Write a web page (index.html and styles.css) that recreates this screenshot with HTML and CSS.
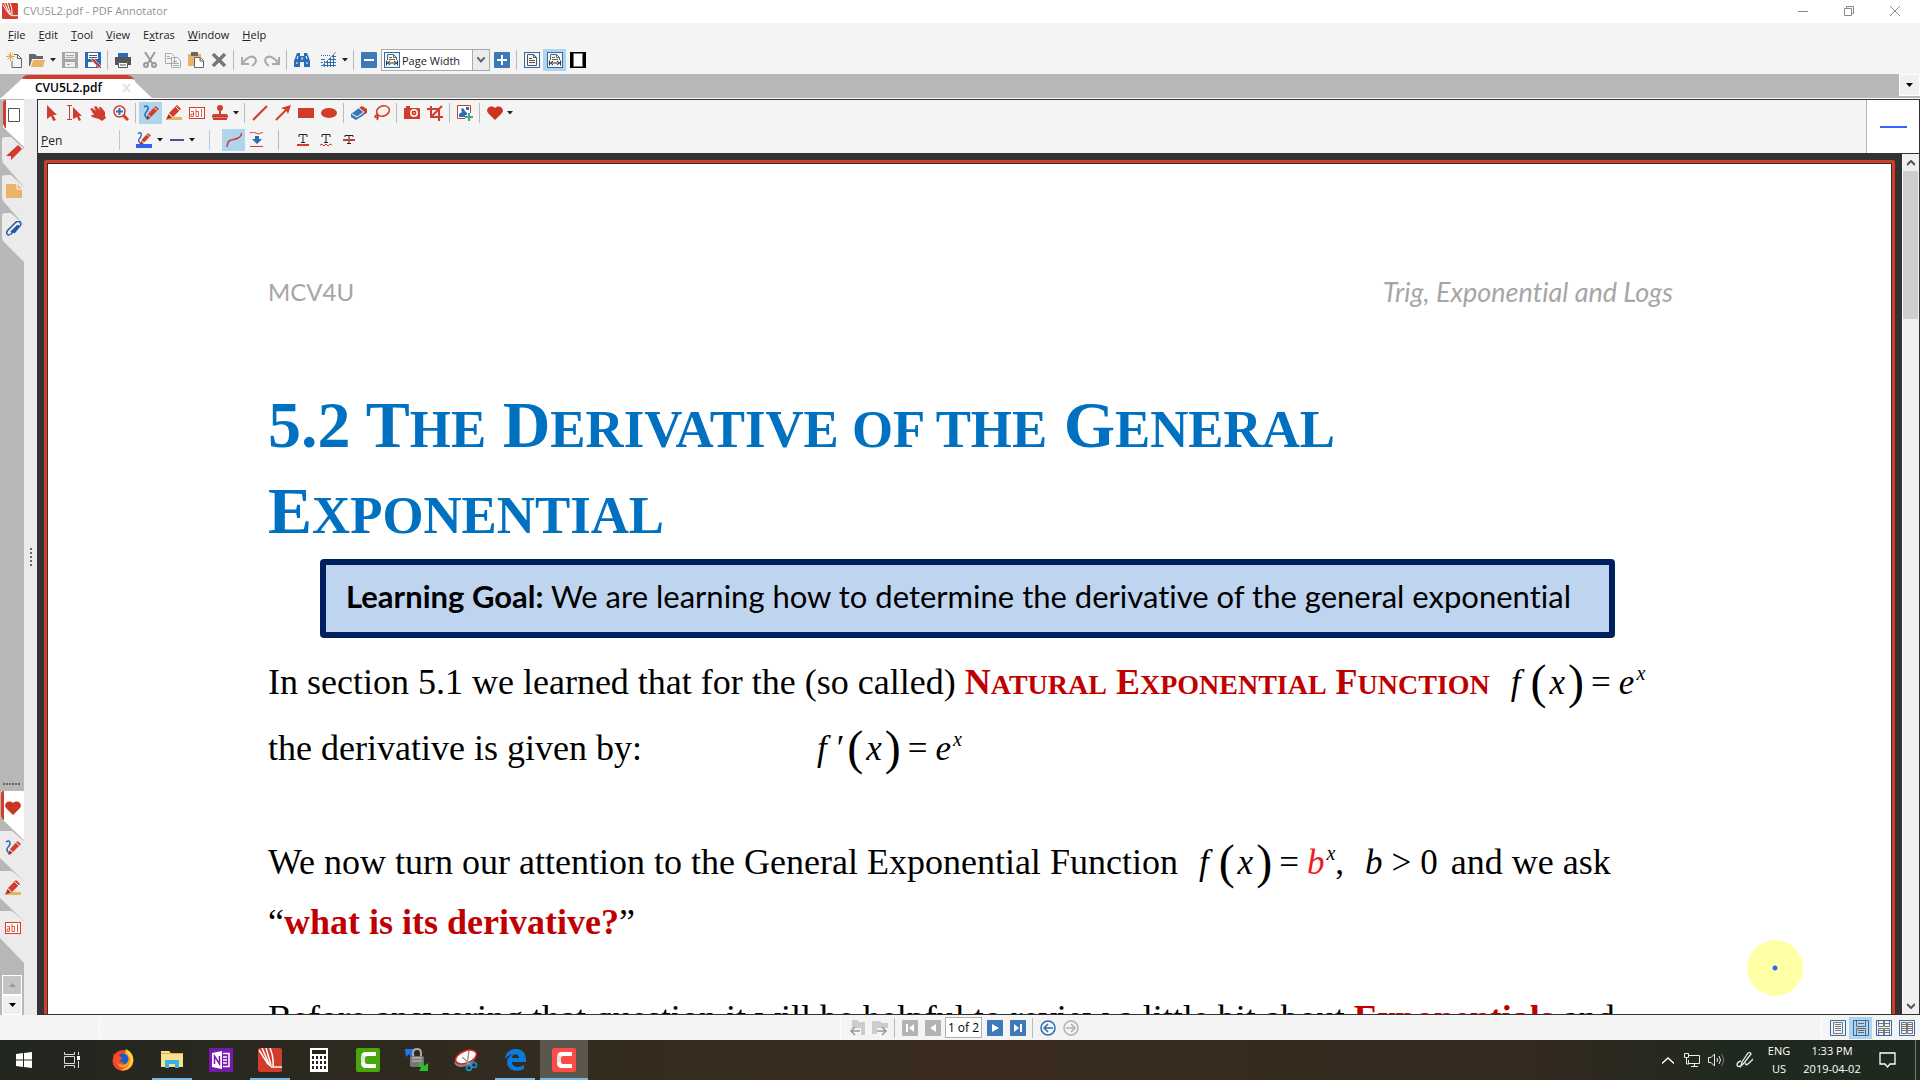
FILE: index.html
```html
<!doctype html>
<html lang="en">

<head>
  <meta charset="utf-8">
  <title>CVU5L2.pdf - PDF Annotator</title>
  <link rel="stylesheet" href="styles.css">
</head>

<body>
  <!-- shared icons -->
  <svg class="sprite">
    <symbol id="caret" viewBox="0 0 6 4"><path d="M0 0h6L3 3.5z" fill="#222"/></symbol>
    <symbol id="logo" viewBox="0 0 24 24">
      <rect width="24" height="24" rx="2" fill="#d23c2a"/>
      <path d="M1 2l9 14M4 0l7 16M8 0l5 17M12 0q4 9 3 18M10 16l4 3h10" fill="none" stroke="#fff" stroke-width="1.5"/>
    </symbol>
    <symbol id="pen" viewBox="0 0 16 16">
      <path d="M1 2c4-3 5 1 3 4-3 3-3 5 1 8" fill="none" stroke="#2a6cb5" stroke-width="1.6"/>
      <path d="M12.5 1L16 4 8 12 5 9z" fill="#d23c2a"/><path d="M4.5 10l3 3-4 2z" fill="#b02c1c"/><path d="M11 2.500l3 3" stroke="#fff"/>
    </symbol>
    <symbol id="marker" viewBox="0 0 16 16">
      <path d="M5 12h11v3H2z" fill="#e9b25c"/><path d="M11 0l4 4-8 8-4-4z" fill="#d23c2a"/><path d="M2.500 9l3.500 3.500L0 15z" fill="#b5301f"/><path d="M10 2l4 4" stroke="#fff"/>
    </symbol>
    <symbol id="textbox" viewBox="0 0 16 12">
      <rect x=".5" y=".5" width="15" height="11" fill="#fff" stroke="#d23c2a"/>
      <path d="M2 4.500h2.500v5H2v-2.500h2.500M7 2v7.500h2.500v-5H7M12.500 2v8" fill="none" stroke="#dc5a48"/>
    </symbol>
    <symbol id="heart" viewBox="0 0 16 14"><path d="M8 14L1 7C-2 3 3-2 8 2c5-4 10 1 7 5z" fill="#c8361f"/></symbol>
    <symbol id="pagewidth" viewBox="0 0 16 16">
      <rect x=".5" y=".5" width="15" height="15" fill="#f4f4f4" stroke="#2d6cb0"/>
      <path d="M3.500 8V2.500h6l3 3V8M9.500 2.500v3h3M5 5.500h3M5 7.500h6" fill="none" stroke="#666"/>
      <path d="M2 11h12M2.500 8.500v5M13.500 8.500v5M6 9l-2.500 2L6 13M10 9l2.500 2L10 13" fill="none" stroke="#333"/>
    </symbol>
    <symbol id="camtasia" viewBox="0 0 24 24">
      <rect width="24" height="24" rx="2" fill="currentColor"/>
      <path d="M20 4H10Q5 4 5 9v6q0 5 5 5h10v-4h-9q-2 0-2-2v-4q0-2 2-2h9z" fill="#fff"/>
      <path d="M9 8.500L5 6v9l4-1z" fill="#000" opacity=".12"/>
    </symbol>
  </svg>

  <div class="app">
    <header class="titlebar">
      <svg width="16" height="16"><use href="#logo"/></svg>
      <span class="title">CVU5L2.pdf - PDF Annotator</span>
      <button class="winbtn" aria-label="Minimize"><svg width="10" height="10"><path d="M0 5.500h10" stroke="#888"/></svg></button>
      <button class="winbtn" aria-label="Restore"><svg width="10" height="10" fill="none" stroke="#888"><path d="M.5 2.500h7v7h-7zM2.500 2V.5h7v7H8"/></svg></button>
      <button class="winbtn" aria-label="Close"><svg width="10" height="10"><path d="M0 0l10 10M10 0L0 10" stroke="#888"/></svg></button>
    </header>

    <nav class="menubar">
      <button><u>F</u>ile</button>
      <button><u>E</u>dit</button>
      <button><u>T</u>ool</button>
      <button><u>V</u>iew</button>
      <button>E<u>x</u>tras</button>
      <button><u>W</u>indow</button>
      <button><u>H</u>elp</button>
    </nav>

    <div class="toolbar main-toolbar">
      <button aria-label="New"><svg width="16" height="16"><path d="M8 2.500h3.500l4 4v9H6V9M11.500 2.500v4h4" fill="none" stroke="#666"/><path d="M4.500 0v9M0 4.500h9M1.500 1.500l6 6M7.500 1.500l-6 6" stroke="#e9a845"/></svg></button>
      <button aria-label="Open"><svg width="16" height="16"><path d="M0 2h6l2 2h6v3H3l-2 7H0z" fill="#666"/><path d="M4 8h12l-2 7H2z" fill="#e9b465"/></svg></button>
      <button class="drop" aria-label="Open recent"><svg width="6" height="4"><use href="#caret"/></svg></button>
      <button aria-label="Save"><svg width="16" height="16"><path d="M0 0h16v16H0z" fill="#a6a6a6"/><path d="M3 1h10v6H3zM3 10h10v5H3z" fill="#eee"/><path d="M4 3.500h8M4 5.500h8M5 12.500h3" stroke="#a6a6a6"/></svg></button>
      <button aria-label="Save as"><svg width="16" height="16"><path d="M0 0h16v16H0z" fill="#2a6cb5"/><path d="M3 1h10v6H3zM3 10h8v5H3z" fill="#fff"/><path d="M4 3.500h8M4 5.500h8" stroke="#555"/><path d="M6 6l3 1 7 7-2 2-7-7z" fill="#d23c2a" stroke="#fff" stroke-width=".5"/></svg></button>
      <i class="sep"></i>
      <button aria-label="Print"><svg width="16" height="16"><path d="M0 5h16v8h-3v-3H3v3H0z" fill="#555"/><path d="M3 1h10v4H3z" fill="#2a6cb5"/><path d="M3.500 10.500h9v5h-9zM5 13h6" fill="#fff" stroke="#555"/></svg></button>
      <button class="gap" aria-label="Cut"><svg width="16" height="16" fill="none" stroke="#999" stroke-width="2"><path d="M3 0l7 11M13 0L6 11"/><circle cx="4" cy="13" r="2"/><circle cx="12" cy="13" r="2"/></svg></button>
      <button aria-label="Copy"><svg width="16" height="16" fill="#f4f4f4" stroke="#aaa"><path d="M.5 1.500h6l3 3v7h-9zM6.500 5.500h6l3 3v7h-9zM2 4.500h3M2 6.500h4M8 9.500h4M8 11.500h6M8 13.500h6"/></svg></button>
      <button aria-label="Paste"><svg width="16" height="16"><path d="M0 2h13v12H0z" fill="#e9b465"/><path d="M3 0h7v4H3z" fill="#666"/><path d="M6.500 5.500h6l3 3v7h-9zM12 5.500v3.500h3" fill="#fff" stroke="#666"/></svg></button>
      <button aria-label="Delete"><svg width="16" height="16"><path d="M2 2l12 12M14 2L2 14" stroke="#777" stroke-width="3.500"/></svg></button>
      <i class="sep"></i>
      <button aria-label="Undo"><svg width="16" height="16" fill="none" stroke="#aaa" stroke-width="2"><path d="M1 5v7h7M1.500 11.500C6 5 11 3 14 6c2 3 0 6-3 8"/></svg></button>
      <button aria-label="Redo"><svg width="16" height="16" fill="none" stroke="#aaa" stroke-width="2"><path d="M15 5v7H8M14.500 11.500C10 5 5 3 2 6c-2 3 0 6 3 8"/></svg></button>
      <i class="sep"></i>
      <button aria-label="Find"><svg width="16" height="16"><path d="M3 1h3v3h4V1h3l3 8v6h-6v-5H6v5H0V9z" fill="#2a6cb5"/><path d="M2 11h2M12 11h2M4 4l-1 3M12 4l1 3M8 5v3" stroke="#fff"/></svg></button>
      <button class="gap" aria-label="Grid"><svg width="16" height="16"><path d="M0 13.500h15M4 10.500h11M7 7.500h8M10 4.500h5M0 10.500h2M0 7.500h4M3.500 9v6M6.500 8v7M9.500 5v10M12.500 2v13" stroke="#2a6cb5"/><path d="M0 3.500h9" stroke="#2a6cb5" stroke-dasharray="1 1"/><path d="M1 14L15 0" stroke="#888"/></svg></button>
      <button class="drop" aria-label="Grid options"><svg width="6" height="4"><use href="#caret"/></svg></button>
      <i class="sep"></i>
      <button aria-label="Zoom out"><svg width="16" height="16"><rect width="16" height="16" rx="1" fill="#3d78b8"/><path d="M3 8h10" stroke="#fff" stroke-width="2"/></svg></button>
      <div class="zoom-box">
        <svg width="16" height="16"><use href="#pagewidth"/></svg>
        <select aria-label="Zoom"><option>Page Width</option></select>
        <span class="zoom-arrow"><svg width="8" height="6"><path d="M0 0l4 4.500L8 0" fill="none" stroke="#666" stroke-width="2"/></svg></span>
      </div>
      <button aria-label="Zoom in"><svg width="16" height="16"><rect width="16" height="16" rx="1" fill="#3d78b8"/><path d="M3 8h10M8 3v10" stroke="#fff" stroke-width="2"/></svg></button>
      <i class="sep"></i>
      <button aria-label="Whole page"><svg width="16" height="16" fill="none"><rect x=".5" y=".5" width="15" height="15" stroke="#2d6cb0"/><path d="M3.500 2.500h6l3 3v8h-9zM9.500 2.500v3h3M5 6.500h3M5 8.500h6M5 10.500h6" stroke="#555"/></svg></button>
      <button class="active" aria-label="Page width"><svg width="16" height="16"><use href="#pagewidth"/></svg></button>
      <button aria-label="Full screen"><svg width="16" height="16"><path d="M0 0h16v16H0z"/><path d="M3.500 1.500h9v13h-9z" fill="#fff" stroke="#777"/></svg></button>
    </div>

    <div class="tabstrip">
      <div class="doc-tab">
        <svg class="tab-shape" width="153" height="24"><path d="M0 24L25 1h104l24 23z" fill="#fff"/><path d="M22 4q2-4 6-4h98q5 0 8 4z" fill="#d23c2a"/><path d="M21 5h114v2H21z" fill="#fff"/></svg>
        <span>CVU5L2.pdf</span>
        <button aria-label="Close tab"><svg width="9" height="8"><path d="M1 0l7 8M8 0L1 8" stroke="#e2e2e2" stroke-width="2"/></svg></button>
      </div>
      <button class="tab-list" aria-label="List tabs"><svg width="7" height="4"><path d="M0 0h7L3.500 4z"/></svg></button>
    </div>

    <div class="workspace">
      <aside class="sidebar">
        <div class="side-tabs">
          <button aria-label="Pages"><svg class="shape" width="24" height="50"><path d="M3 1h21v47L3 28z" fill="#fff"/><path d="M5 1Q3 1 3 4v21l2 4h1V1z" fill="#d23c2a"/></svg><svg class="glyph" width="16" height="16"><path d="M2.500 1.500h11v13h-11z" fill="#fff" stroke="#555"/></svg></button>
          <button aria-label="Bookmarks"><svg class="shape" width="24" height="50"><path d="M5 0h6l13 12v38L4 27Q2 25 2 22V3q0-3 3-3z" fill="#ebebeb"/></svg><svg class="glyph" width="16" height="16"><path d="M12 0l4 4L5 15v-4H0z" fill="#d23c2a"/></svg></button>
          <button aria-label="Annotations"><svg class="shape" width="24" height="50"><path d="M5 0h6l13 12v38L4 27Q2 25 2 22V3q0-3 3-3z" fill="#ebebeb"/></svg><svg class="glyph" width="16" height="16"><path d="M0 1h11l5 5v9H0z" fill="#e9b465"/><path d="M11 1v5h5" fill="#e9b465" stroke="#fff"/></svg></button>
          <button aria-label="Attachments"><svg class="shape" width="24" height="50"><path d="M5 0h6l13 12v37L4 29Q2 27 2 24V3q0-3 3-3z" fill="#ebebeb"/></svg><svg class="glyph" width="16" height="16"><path d="M5 11l6-6q2-1 1 1l-7 7q-3 2-4 0-1-2 1-4l7-7q3-3 5-1 2 3-1 5l-5 6" fill="none" stroke="#1d5aa8" stroke-width="1.500"/></svg></button>
        </div>
        <div class="tool-tabs">
          <div class="grip"></div>
          <button aria-label="Favorites"><svg class="shape" width="24" height="50"><path d="M1 0h23v49L3 29z" fill="#fff"/><path d="M3 0Q1 0 1 3v22l2 4h1V0z" fill="#d23c2a"/></svg><svg class="glyph" width="16" height="14"><use href="#heart"/></svg></button>
          <button aria-label="Pen"><svg class="shape" width="24" height="50"><path d="M0 0h12l12 10v40L0 27z" fill="#ebebeb"/></svg><svg class="glyph" width="16" height="16"><use href="#pen"/></svg></button>
          <button aria-label="Marker"><svg class="shape" width="24" height="50"><path d="M0 0h12l12 10v40L0 27z" fill="#ebebeb"/></svg><svg class="glyph" width="16" height="16"><use href="#marker"/></svg></button>
          <button aria-label="Text"><svg class="shape" width="24" height="52"><path d="M0 0h12l12 10v42L0 27z" fill="#ebebeb"/></svg><svg class="glyph" width="16" height="12"><use href="#textbox"/></svg></button>
          <div class="spin">
            <button class="disabled" aria-label="Up"><svg width="7" height="4"><path d="M0 4h7L3.500 0z" fill="#999"/></svg></button>
            <button aria-label="Down"><svg width="7" height="4"><path d="M0 0h7L3.500 4z"/></svg></button>
          </div>
        </div>
      </aside>
      <div class="splitter"><div class="grip-v"></div></div>

      <main class="editor">
        <div class="tools">
          <div class="tool-rows">
            <div class="toolbar">
              <button aria-label="Select"><svg width="16" height="16"><path d="M3 0l10 10H9l3 5-3 1-2-5-4 3z" fill="#d23c2a"/></svg></button>
              <button aria-label="Select text"><svg width="16" height="16"><path d="M6 2l9 9h-3l2 4-2 1-2-4-4 2z" fill="#d23c2a"/><path d="M0 .5h5M0 14.500h5M2.500 0v15" stroke="#d23c2a"/></svg></button>
              <button aria-label="Pan"><svg width="16" height="16"><path d="M0 4l2-1 4 3-2-4 2-1 4 4-1-3 2 0 4 5v4l1 2-4 3-3-2-7-2-1-2 3 0-3-5z" fill="#d23c2a"/></svg></button>
              <button aria-label="Zoom"><svg width="16" height="16"><path d="M10 10l5 5" stroke="#d23c2a" stroke-width="3"/><circle cx="6.500" cy="6.500" r="5.500" fill="#fff" stroke="#d23c2a" stroke-width="1.500"/><path d="M3 6.500h7M6.500 3v7" stroke="#2a6cb5" stroke-width="2"/></svg></button>
              <i class="sep"></i>
              <button class="active" aria-label="Pen"><svg width="16" height="16"><use href="#pen"/></svg></button>
              <button aria-label="Marker"><svg width="16" height="16"><use href="#marker"/></svg></button>
              <button aria-label="Text"><svg width="16" height="12"><use href="#textbox"/></svg></button>
              <button aria-label="Stamp"><svg width="16" height="16"><circle cx="8" cy="3" r="3" fill="#d23c2a"/><path d="M7 5h2v4h5q2 0 2 3H0q0-3 2-3h5zM1 13h14v2H1z" fill="#d23c2a"/><path d="M0 12.500h16" stroke="#c9779f"/></svg></button>
              <button class="drop" aria-label="Stamps"><svg width="6" height="4"><use href="#caret"/></svg></button>
              <i class="sep"></i>
              <button aria-label="Line"><svg width="16" height="16"><path d="M1 15L15 1" stroke="#d23c2a" stroke-width="2"/></svg></button>
              <button aria-label="Arrow"><svg width="16" height="16"><path d="M1 15L12 4" stroke="#d23c2a" stroke-width="2"/><path d="M16 0l-3 9-2-4-5-2z" fill="#d23c2a"/></svg></button>
              <button aria-label="Rectangle"><svg width="16" height="16"><path d="M0 3h16v10H0z" fill="#d23c2a"/></svg></button>
              <button aria-label="Ellipse"><svg width="16" height="16"><ellipse cx="8" cy="8" rx="8" ry="5" fill="#d23c2a"/></svg></button>
              <i class="sep"></i>
              <button aria-label="Eraser"><svg width="16" height="16"><path d="M9 2l2-1 5 3v4l-4 2-6-4z" fill="#d23c2a"/><path d="M0 9l8-6 5 4v3l-8 5-5-3z" fill="#3d78b8"/><path d="M1 9l5 3 7-5M8 3l5 4" fill="none" stroke="#fff"/></svg></button>
              <button aria-label="Lasso"><svg width="16" height="16" fill="none" stroke="#d23c2a" stroke-width="1.500"><ellipse cx="9" cy="6" rx="6.500" ry="5" transform="rotate(-20 9 6)"/><path d="M4 10q-3 0-3 2 3 1 3 0 0-2-1-2 2 2 0 5"/></svg></button>
              <i class="sep"></i>
              <button aria-label="Snapshot"><svg width="16" height="16"><path d="M0 3h2V1h4v2h9l1 1v10H0z" fill="#d23c2a"/><circle cx="10" cy="8" r="3.200" fill="#d23c2a" stroke="#fff" stroke-width="1.500"/><circle cx="10" cy="8" r="1" fill="#e9b465"/></svg></button>
              <button aria-label="Crop"><svg width="16" height="16"><path d="M0 4h12v12M4 1v11h12M15 1L5 11" fill="none" stroke="#d23c2a" stroke-width="2"/></svg></button>
              <i class="sep"></i>
              <button aria-label="Insert image"><svg width="16" height="16"><path d="M.5.5h13v13H.5z" fill="#fff" stroke="#d23c2a"/><path d="M2 12V9l3-2-1-3 2-1 2 3 3 3v3zM9 2h3v3H9z" fill="#2a6cb5"/><path d="M12 8v8M8 12h8" stroke="#f4f4f4" stroke-width="4"/><path d="M12 8v8M8 12h8" stroke="#42ac86" stroke-width="2"/></svg></button>
              <i class="sep"></i>
              <button aria-label="Favorites"><svg width="16" height="14"><use href="#heart"/></svg></button>
              <button class="drop tight" aria-label="More favorites"><svg width="6" height="4"><use href="#caret"/></svg></button>
            </div>
            <div class="toolbar options">
              <span class="tool-name"><u>P</u>en</span>
              <i class="sep wide blue"></i>
              <button aria-label="Pen color"><svg width="16" height="16"><path d="M0 12h16v4H0z" fill="#2f62f5"/><use href="#pen" width="16" height="14"/></svg></button>
              <button class="drop" aria-label="Colors"><svg width="6" height="4"><use href="#caret"/></svg></button>
              <button aria-label="Line width"><svg width="14" height="16"><path d="M0 8h14" stroke="#4a5584" stroke-width="2"/></svg></button>
              <button class="drop tight" aria-label="Widths"><svg width="6" height="4"><use href="#caret"/></svg></button>
              <i class="sep wide far blue"></i>
              <button class="active" aria-label="Smooth"><svg width="16" height="16"><path d="M1 15C2 5 7 9 12 6q3-1 4-5" fill="none" stroke="#c9403a" stroke-width="1.600"/></svg></button>
              <button aria-label="Pressure"><svg width="16" height="16"><path d="M1 1q4-2 6 0t7-1M1 14.500h13" fill="none" stroke="#d23c2a"/><path d="M6 4h4v3h3l-5 5-5-5h3z" fill="#2a6cb5"/></svg></button>
              <i class="sep wide"></i>
              <button aria-label="Underline"><svg width="12" height="12"><path d="M2 3V.5h8V3M6 0v8M4 8.500h4" fill="none" stroke="#223"/><path d="M0 11h12" stroke="#d23c2a" stroke-width="2"/></svg></button>
              <button aria-label="Squiggly"><svg width="12" height="12"><path d="M2 3V.5h8V3M6 0v8M4 8.500h4" fill="none" stroke="#223"/><path d="M0 11l2-1 2 2 2-2 2 2 2-2 2 1" fill="none" stroke="#d23c2a"/></svg></button>
              <button aria-label="Strikethrough"><svg width="12" height="12"><path d="M2 3V1.500h8V3M6 1v8M4 9.500h4" fill="none" stroke="#223"/><path d="M0 6h12" stroke="#d23c2a" stroke-width="2"/></svg></button>
            </div>
          </div>
          <div class="preview"><div class="stroke"></div></div>
        </div>

        <div class="view">
          <div class="canvas">
            <article class="page">
              <div class="page-header"><span>MCV4U</span><em>Trig, Exponential and Logs</em></div>
              <h1>5.2 T<small>he</small> D<small>erivative of the</small> G<small>eneral</small> E<small>xponential</small></h1>
              <div class="goal"><b>Learning Goal:</b> We are learning how to determine the derivative of the general exponential</div>
              <p class="intro">In section 5.1 we learned that for the (so called) <b class="caps">N<small>atural</small> E<small>xponential</small> F<small>unction</small></b>
                <span class="math"><i>f</i><span class="paren open">(</span><i>x</i><span class="paren">)</span><span class="op">=</span><i>e</i><sup>x</sup></span><br>
                the derivative is given by:
                <span class="math second"><i>f</i><span class="prime">′</span><span class="paren">(</span><i>x</i><span class="paren">)</span><span class="op">=</span><i>e</i><sup>x</sup></span></p>
              <p class="question">We now turn our attention to the General Exponential Function
                <span class="math"><i>f</i><span class="paren open">(</span><i>x</i><span class="paren">)</span><span class="op">=</span><i class="red">b</i><sup>x</sup>,</span>
                <span class="math condition"><i>b</i><span class="op">&gt;</span>0</span> and we ask<br>
                “<b>what is its derivative?</b>”</p>
              <p class="review">Before answering that question it will be helpful to review a little bit about <b>Exponentials</b> and</p>
            </article>
            <div class="spot"></div>
          </div>
          <div class="scrollbar">
            <button aria-label="Scroll up"><svg width="8" height="6"><path d="M0 5l4-4 4 4" fill="none" stroke="#555" stroke-width="2"/></svg></button>
            <div class="thumb"></div>
            <button aria-label="Scroll down"><svg width="8" height="6"><path d="M0 1l4 4 4-4" fill="none" stroke="#555" stroke-width="2"/></svg></button>
          </div>
        </div>
      </main>
    </div>

    <footer class="statusbar">
      <div class="status-side"><i class="notch"></i></div>
      <div class="pager">
        <i class="notch"></i>
        <button aria-label="Previous document"><svg width="16" height="16"><path d="M3 0h5l2 2h6v13h-4V8H3z" fill="#ccc"/><path d="M11 11H2M6 7l-4 4 4 4" fill="none" stroke="#999" stroke-width="1.500"/></svg></button>
        <button aria-label="Next document"><svg width="16" height="16"><path d="M0 1h8l2 2h6v5H5v6H0z" fill="#ccc"/><path d="M5 11h9M10 7l4 4-4 4" fill="none" stroke="#999" stroke-width="1.500"/></svg></button>
        <i class="sep"></i>
        <button aria-label="First page"><svg width="16" height="16"><rect width="16" height="16" rx="1" fill="#b2b2b2"/><path d="M4 4h2v8H4zM12 4v8L7 8z" fill="#fff"/></svg></button>
        <button aria-label="Previous page"><svg width="16" height="16"><rect width="16" height="16" rx="1" fill="#b2b2b2"/><path d="M11 4v8L5 8z" fill="#fff"/></svg></button>
        <input type="text" value="1 of 2" aria-label="Page">
        <button aria-label="Next page"><svg width="16" height="16"><rect width="16" height="16" rx="1" fill="#3d78b8"/><path d="M5 4v8l7-4z" fill="#fff"/></svg></button>
        <button aria-label="Last page"><svg width="16" height="16"><rect width="16" height="16" rx="1" fill="#3d78b8"/><path d="M4 4v8l5-4zM10 4h2v8h-2z" fill="#fff"/></svg></button>
        <i class="sep"></i>
        <button aria-label="Back"><svg width="16" height="16" fill="none" stroke="#2a6cb5" stroke-width="1.500"><circle cx="8" cy="8" r="7"/><path d="M13 8H4M8 4L4 8l4 4"/></svg></button>
        <button aria-label="Forward"><svg width="16" height="16" fill="none" stroke="#b0b0b0" stroke-width="1.500"><circle cx="8" cy="8" r="7"/><path d="M3 8h9M8 4l4 4-4 4"/></svg></button>
      </div>
      <div class="layouts">
        <i class="notch"></i>
        <button aria-label="Single page"><svg width="16" height="16" fill="none"><path d="M.5.5h15v15H.5z" stroke="#2d6cb0"/><path d="M3.500 2.500h9v11h-9zM5 4.500h6M5 6.500h6M5 8.500h6M5 10.500h6" stroke="#777"/></svg></button>
        <button class="active" aria-label="Continuous"><svg width="16" height="16" fill="none"><path d="M.5.5h15v15H.5z" stroke="#2d6cb0"/><path d="M3.500 1v5.500h9V1M5 3.500h6M3.500 15V8.500h9V15M5 10.500h6M5 12.500h6" stroke="#666"/></svg></button>
        <button aria-label="Two pages continuous"><svg width="16" height="16" fill="none"><path d="M.5.5h15v15H.5z" stroke="#2d6cb0"/><path d="M2.500 1v5.500h5V1M8.500 1v5.500h5V1M2.500 15V8.500h5V15M8.500 15V8.500h5V15M3 3.500h4M9 3.500h4M3 10.500h4M9 10.500h4M3 12.500h4M9 12.500h4" stroke="#777"/></svg></button>
        <button aria-label="Two pages"><svg width="16" height="16" fill="none"><path d="M.5.5h15v15H.5z" stroke="#2d6cb0"/><path d="M2.500 2.500h5v11h-5zM8.500 2.500h5v11h-5zM3 4.500h4M3 6.500h4M3 8.500h4M3 10.500h4M9 4.500h4M9 6.500h4M9 8.500h4M9 10.500h4" stroke="#777"/></svg></button>
      </div>
    </footer>
  </div>

  <div class="taskbar">
    <button aria-label="Start"><svg width="16" height="16"><path d="M0 2l7-1v6.500H0zM8 1l8-1v7.500H8zM0 8.500h7V15l-7-1zM8 8.500h8V16l-8-1z" fill="#fff"/></svg></button>
    <button class="taskview" aria-label="Task View"><svg width="16" height="16" fill="none" stroke="#ddd"><path d="M.5 4.500h10v7H.5zM.5 0v2.500h10V0M.5 16v-2.500h10V16M14.500 0v3M14.500 9v7"/><path d="M13 4h3v4h-3z" fill="#fff" stroke="none"/></svg></button>
    <button aria-label="Firefox"><svg width="22" height="22" viewBox="0 0 24 24"><circle cx="12" cy="12.500" r="11.500" fill="#f6422f"/><path d="M15 0c7 3 9 9 8 14-2 8-9 10-14 9 8-2 12-6 9-12-1-4-4-6-3-11z" fill="#ffd23b"/><path d="M15 4q7 5 4 12-4 6-10 4-6-4-3-11z" fill="#ff9820"/><circle cx="12" cy="11" r="6" fill="#1b5bc4"/><path d="M1 5l3 2 4 0 3 3-3 3 5 2c-2 3-7 2-9-2z" fill="#f5502c"/></svg></button>
    <button class="open" aria-label="File Explorer"><svg width="22" height="20"><path d="M0 1h8l2 2h12v14H0z" fill="#fbe08c"/><path d="M0 3h22v1H0z" fill="#d9b04c"/><path d="M4 18v-8h14v8h-4v-4H8v4z" fill="#38b1e6"/></svg></button>
    <button aria-label="OneNote"><svg width="24" height="24"><path d="M0 0h24v24H0z" fill="#7719aa"/><path d="M3 5l10-2v18L3 19z" fill="#fff"/><path d="M5.500 16V8l5 8V8" fill="none" stroke="#7719aa" stroke-width="1.500"/><path d="M14 5.500h6v13h-6M14 9h4M14 12h4M14 15h4" fill="none" stroke="#fff" stroke-width="1.500"/></svg></button>
    <button class="open" aria-label="PDF Annotator"><svg width="24" height="24"><use href="#logo"/></svg></button>
    <button aria-label="Calculator"><svg width="18" height="24"><path d="M0 0h18v24H0z" fill="#fff"/><path d="M2 2h14v4H2z" fill="#28241c"/><path d="M2 9.500h14M2 14.500h14M2 19.500h14" stroke="#28241c" stroke-width="3" stroke-dasharray="2 2"/></svg></button>
    <button class="green" aria-label="Camtasia"><svg width="24" height="24"><use href="#camtasia"/></svg></button>
    <button aria-label="Lock tool"><svg width="24" height="24"><path d="M0 1h9L7 4l4 5-3 2-4-5-3 3z" fill="#1d78ec"/><path d="M8 9V5q0-4 4-4t4 4v4" fill="none" stroke="#aaa" stroke-width="2"/><rect x="5" y="8" width="14" height="11" rx="2" fill="#777"/><path d="M7 10h10M7 13h10" stroke="#ccc"/><path d="M23 23h-9l2-3-3-4 3-2 3 4 4-3z" fill="#27c234"/></svg></button>
    <button aria-label="Snipping Tool"><svg width="24" height="24"><ellipse cx="11" cy="12" rx="11" ry="6" fill="#888" transform="rotate(-22 11 12)"/><ellipse cx="12" cy="9" rx="11" ry="6" fill="#fff" stroke="#d22" stroke-width="1.500" transform="rotate(-22 12 9)"/><path d="M8 9l9 8M15 3l-2 13" stroke="#999" stroke-width="1.500"/><circle cx="15" cy="20" r="2.500" fill="none" stroke="#1692d8" stroke-width="1.500"/><circle cx="20" cy="17" r="2.500" fill="none" stroke="#1692d8" stroke-width="1.500"/></svg></button>
    <button class="open" aria-label="Edge"><svg width="21" height="22"><path d="M0 10C1-3 20-4 21 10v3H7c0 6 8 6 12 3v4C11 24 2 21 2 13q0-5 6-8-5 1-8 5zm7-1h7c0-5-7-5-7 0z" fill="#0a7bde"/></svg></button>
    <button class="open current red-app" aria-label="Recorder"><svg width="24" height="24"><use href="#camtasia"/></svg></button>

    <div class="tray">
      <svg width="12" height="7"><path d="M0 6.500L6 1l6 5.500" fill="none" stroke="#fff" stroke-width="1.300"/></svg>
      <svg class="net" width="16" height="14" fill="none" stroke="#eee"><path d="M5 2.500h10.500v8h-11V7M7 13.500h7M10.500 11v3M.5.5h4v4h-4zM2.500 5v6H5"/></svg>
      <svg class="vol" width="17" height="14" fill="none" stroke="#eee"><path d="M.5 4.500H3l3.500-3.500v12L3 9.500H.5zM9 5q1 2 0 4M11 3q3 4 0 8"/><path d="M13.500 1q4 6 0 12" stroke="#777"/></svg>
      <svg class="ink" width="17" height="16" fill="none" stroke="#eee" stroke-width="1.300"><path d="M6 13q-4 3-5 0 0-3 4-4M6 10l6-9q3-1 3 1l-7 9-3 3zM10 11q-1 3 2 1l3-3q2-1 1-2"/></svg>
      <div class="lang">ENG<br>US</div>
      <div class="clock">1:33 PM<br>2019-04-02</div>
      <svg class="note" width="17" height="16" fill="none" stroke="#fff" stroke-width="1.300"><path d="M1 1h15v11h-5l-2.500 3L6 12H1z"/></svg>
      <i class="desktop"></i>
    </div>
  </div>
</body>

</html>
```
FILE: styles.css
```css
* {
  box-sizing: border-box;
}

body {
  margin: 0;
  height: 100vh;
  display: flex;
  flex-direction: column;
  overflow: hidden;
  font-family: "Open Sans", "Noto Sans", sans-serif;
  font-size: 12px;
  color: #222;
}

button {
  padding: 0;
  border: none;
  background: none;
  font: inherit;
  color: inherit;
}

svg {
  display: block;
  flex: none;
}

.sprite {
  display: none;
}

.app {
  flex: 1;
  min-height: 0;
  display: flex;
  flex-direction: column;
  background: #f4f4f4;
}

/* title bar */
.titlebar {
  height: 23px;
  padding: 0 2px 2px 2px;
  display: flex;
  align-items: center;
  background: #fff;
  color: #929292;
  font-size: 11px;
}

.titlebar .title {
  flex: 1;
  margin-left: 5px;
}

.winbtn {
  width: 46px;
  display: flex;
  justify-content: center;
}

.menubar {
  height: 23px;
  padding-left: 8px;
  display: flex;
  align-items: center;
  gap: 13px;
  font-size: 11px;
}

/* toolbars */
.toolbar {
  height: 26px;
  display: flex;
  align-items: center;
}

.toolbar button,
.statusbar button {
  width: 23px;
  height: 22px;
  display: flex;
  align-items: center;
  justify-content: center;
}

.toolbar .active,
.statusbar .active {
  background: #afd4ee;
}

.toolbar .drop {
  width: 10px;
}

.toolbar .tight {
  width: 7px;
}

.toolbar .gap {
  margin-left: 4px;
}

.sep {
  width: 1px;
  height: 20px;
  margin: 0 3px;
  background: #bbb;
}

.sep.wide {
  margin: 0 12px 0 10px;
}

.sep.far {
  margin: 0 12px 0 14px;
}

.sep.blue {
  background: #b6c8dc;
}

.main-toolbar {
  height: 28px;
  padding-left: 2px;
}

.toolbar.options {
  height: 28px;
}

.zoom-box {
  width: 109px;
  height: 22px;
  margin-left: 1px;
  padding-left: 2px;
  display: flex;
  align-items: center;
  border: 1px solid #aaa;
  background: #fff;
}

.zoom-box select {
  flex: 1;
  min-width: 0;
  padding: 0 0 0 2px;
  border: none;
  appearance: none;
  background: none;
  font: inherit;
  font-size: 11px;
  color: #222;
}

.zoom-arrow {
  width: 17px;
  height: 20px;
  display: flex;
  align-items: center;
  justify-content: center;
  border-left: 1px solid #aaa;
  background: #ececec;
}

/* document tabs */
.tabstrip {
  height: 25px;
  display: flex;
  justify-content: space-between;
  background: #b7b7b7;
  border-bottom: 1px solid #fff;
}

.doc-tab {
  position: relative;
  width: 153px;
  padding: 3px 22px 0 35px;
  display: flex;
  align-items: center;
  justify-content: space-between;
  font-weight: 600;
  color: #000;
}

.doc-tab span,
.doc-tab button {
  position: relative;
}

.tab-shape {
  position: absolute;
  left: 0;
  top: 1px;
}

.tab-list {
  width: 21px;
  height: 22px;
  display: flex;
  align-items: center;
  justify-content: center;
  border: 1px solid #fff;
  background: #f0f0f0;
}

/* left side */
.workspace {
  flex: 1;
  min-height: 0;
  display: flex;
}

.sidebar {
  width: 24px;
  display: flex;
  flex-direction: column;
  justify-content: space-between;
  background: #b7b7b7;
}

.sidebar .side-tabs > button,
.sidebar .tool-tabs > button {
  position: relative;
  display: flex;
  align-items: center;
  width: 24px;
  height: 38px;
}

.sidebar .tool-tabs > button {
  height: 40px;
}

.shape {
  position: absolute;
  left: 0;
  top: 0;
}

.glyph {
  position: relative;
  margin: 0 2px 6px 6px;
}

.tool-tabs .glyph {
  margin: 0 3px 6px 5px;
}

.grip {
  height: 2px;
  margin: 0 3px 6px 3px;
  background: repeating-linear-gradient(to right, #666 0 2px, transparent 2px 3px);
}

.spin {
  width: 20px;
  margin: 24px 0 0 2px;
}

.spin button {
  width: 20px;
  height: 20px;
  display: flex;
  align-items: center;
  justify-content: center;
  border: 1px solid #fff;
  background: #f0f0f0;
}

.spin .disabled {
  background: #c4c4c4;
}

.splitter {
  width: 13px;
  display: flex;
  align-items: center;
  justify-content: center;
  background: #ebebeb;
}

.grip-v {
  width: 2px;
  height: 18px;
  background: repeating-linear-gradient(#666 0 2px, transparent 2px 4px);
}

/* editor */
.editor {
  flex: 1;
  min-width: 0;
  display: flex;
  flex-direction: column;
  border: 1px solid #323232;
}

.tools {
  display: flex;
  background: #f4f4f4;
}

.tool-rows {
  flex: 1;
  height: 53px;
  padding-left: 2px;
}

.tool-name {
  width: 69px;
  padding-left: 1px;
}

.preview {
  width: 53px;
  display: flex;
  align-items: center;
  justify-content: center;
  border-left: 1px solid #b7b7b7;
  background: #fff;
}

.stroke {
  width: 27px;
  height: 2px;
  background: #3264ff;
}

.view {
  flex: 1;
  min-height: 0;
  display: flex;
  border-top: 1px solid #323232;
}

.canvas {
  position: relative;
  flex: 1;
  padding: 6px 7px 0 6px;
  overflow: hidden;
  background: #323232;
}

.page {
  min-height: 1200px;
  padding: 0 219px 0 221px;
  border: 3px solid #d23c2a;
  border-radius: 2px;
  outline: 1px solid #323232;
  outline-offset: -4px;
  background: #fff;
  font-family: "Liberation Serif", serif;
  font-size: 36px;
  font-variant-ligatures: none;
  color: #000;
}

.page-header {
  display: flex;
  justify-content: space-between;
  padding-top: 113px;
  font-family: Lato, sans-serif;
  font-size: 24px;
  line-height: 32px;
  color: #a6a6a6;
}

.page-header em {
  font-size: 27px;
}

.page h1 {
  margin: 74px 0 0;
  font-size: 66px;
  line-height: 86px;
  color: #0070c0;
}

.page small {
  font-size: 80%;
  line-height: 0;
  text-transform: uppercase;
}

.page .caps small {
  font-size: 28px;
}

.goal {
  margin: 5px 58px 0 52px;
  padding: 11px 20px 0;
  height: 79px;
  border: 6px solid #001f5f;
  border-radius: 4px;
  background: #bfd4ef;
  font-family: Lato, sans-serif;
  font-size: 31px;
  line-height: 40px;
  white-space: nowrap;
}

.page p {
  margin: 0;
  white-space: nowrap;
}

.page p b {
  color: #c00000;
}

.page .red {
  color: #ed1c24;
}

.page .intro {
  margin-top: 11px;
  line-height: 66px;
}

.page .question {
  margin-top: 51px;
  line-height: 60px;
}

.page .review {
  margin-top: 36px;
  line-height: 60px;
}

/* formulas */
.math {
  margin-left: 12px;
  font-size: 35px;
  line-height: 0;
}

.math.second {
  margin-left: 166px;
}

.math.condition {
  margin: 0 4px 0 12px;
}

.math sup {
  margin-left: 2px;
  font-size: 20px;
  font-style: italic;
  line-height: 0;
  vertical-align: 14px;
}

.math .prime {
  margin-left: 10px;
}

.math .paren {
  margin: 0 3px;
  font-size: 48px;
  line-height: 0;
  vertical-align: -4px;
}

.math .open {
  margin-left: 10px;
}

.math .op {
  margin: 0 8px 0 4px;
}

.condition .op {
  margin: 0 9px;
}

/* highlighted cursor */
.spot {
  position: absolute;
  right: 99px;
  bottom: 18px;
  width: 56px;
  height: 56px;
  border-radius: 50%;
  background: radial-gradient(#3264ff 0 2px, #ffffa5 3px);
}

.scrollbar {
  width: 17px;
  display: flex;
  flex-direction: column;
  border-left: 1px solid #fff;
  background: #f0f0f0;
}

.scrollbar button {
  height: 17px;
  display: flex;
  align-items: center;
  justify-content: center;
}

.scrollbar .thumb {
  height: 148px;
  margin: 0 1px auto 0;
  background: #cdcdcd;
}

/* status bar */
.statusbar {
  height: 25px;
  display: flex;
  align-items: center;
  justify-content: space-between;
}

.status-side,
.layouts {
  flex: 1;
  display: flex;
  align-items: center;
}

.status-side .notch {
  margin-left: 99px;
}

.layouts {
  justify-content: flex-end;
  padding-right: 2px;
}

.pager {
  margin-left: 4px;
  display: flex;
  align-items: center;
}

.notch {
  width: 1px;
  height: 20px;
  margin-right: 4px;
  background: #fff;
}

.pager input {
  width: 37px;
  height: 21px;
  margin: 0 1px;
  padding: 0;
  border: 1px solid #b0b0b0;
  background: #fff;
  font: inherit;
  text-align: center;
}

/* windows taskbar */
.taskbar {
  height: 40px;
  display: flex;
  gap: 1px;
  background: linear-gradient(to right, #21261f, #322b1f 25%, #3a2d1f 50%, #33291f 80%, #20291f 90%);
  color: #fff;
}

.taskbar button {
  width: 48px;
  display: flex;
  align-items: center;
  justify-content: center;
}

.taskbar .taskview {
  margin: 0 2px 0 -1px;
}

.taskbar .open {
  background: linear-gradient(#76b9ed, #76b9ed) center bottom / 40px 2px no-repeat;
}

.taskbar .current {
  background: linear-gradient(#76b9ed, #76b9ed) center bottom / 48px 2px no-repeat, #5b564c;
}

.taskbar .green {
  color: #48a70b;
}

.taskbar .red-app {
  color: #fb4d46;
}

.tray {
  flex: 1;
  display: flex;
  align-items: center;
  justify-content: flex-end;
  font-size: 11px;
  line-height: 18px;
  text-align: center;
}

.net {
  margin-left: 10px;
}

.vol {
  margin-left: 8px;
}

.ink {
  margin-left: 11px;
}

.lang {
  width: 24px;
  margin-left: 14px;
}

.clock {
  width: 62px;
  margin-left: 10px;
}

.note {
  margin: 0 19px 0 16px;
}

.desktop {
  width: 5px;
  height: 40px;
  border-left: 1px solid #777;
}
```
